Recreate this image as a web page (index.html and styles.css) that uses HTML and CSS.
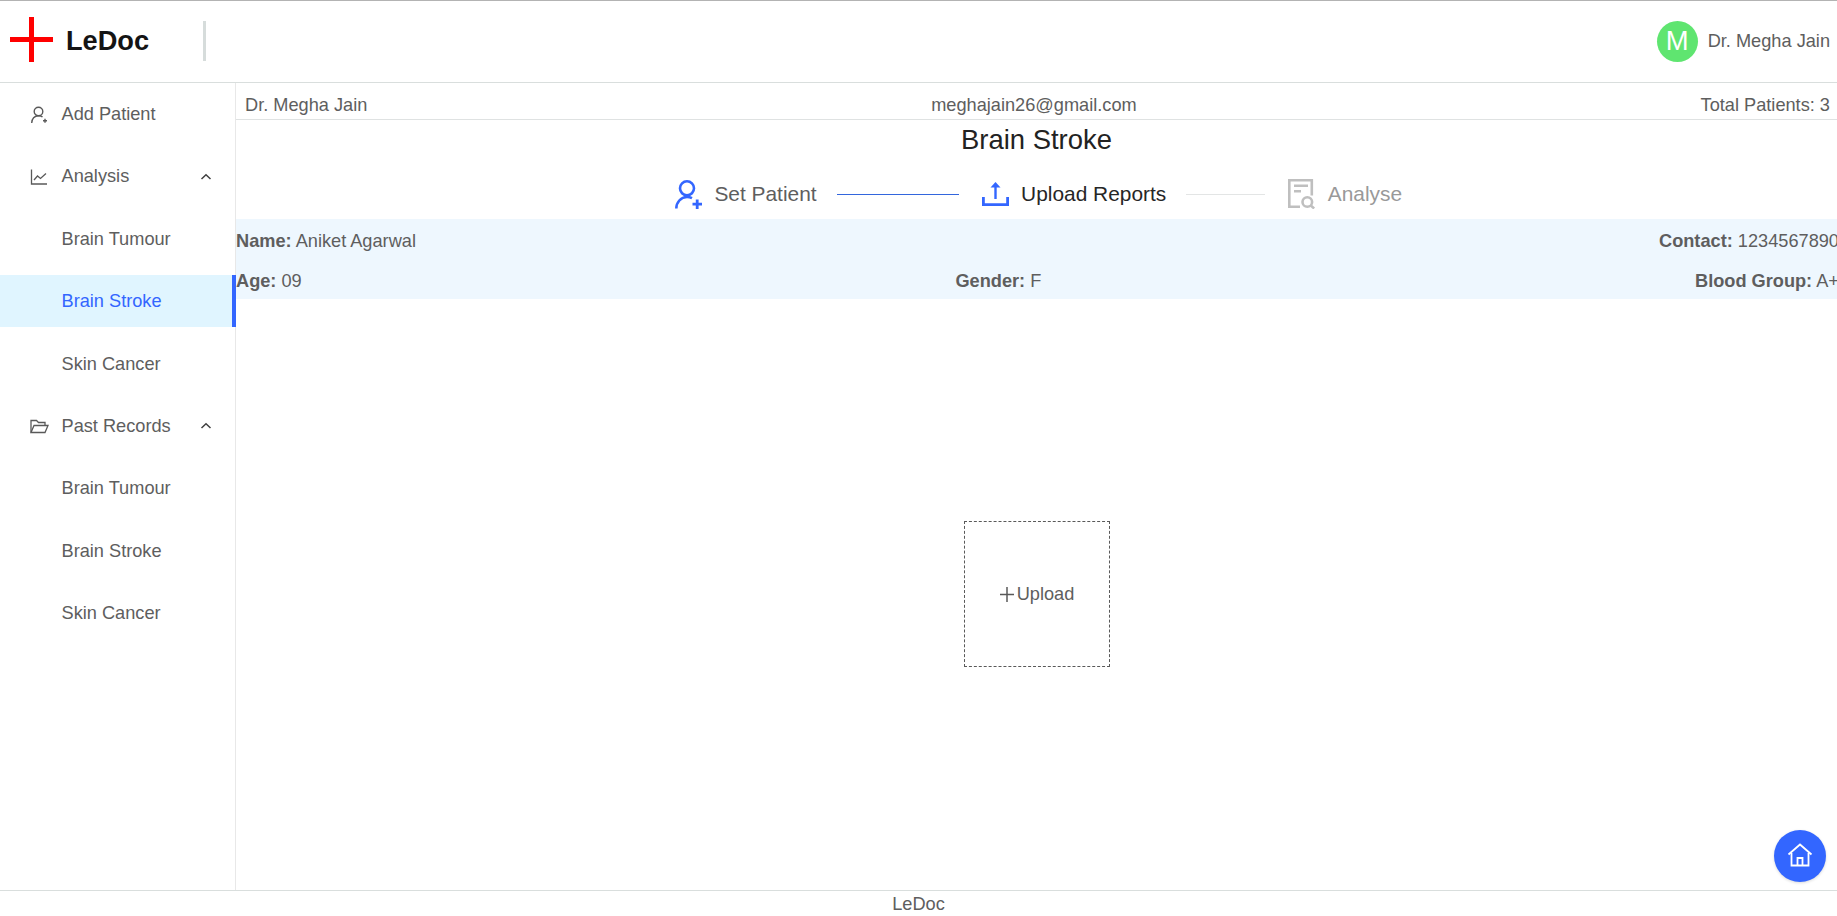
FILE: index.html
```html
<!DOCTYPE html>
<html lang="en">
<head>
<meta charset="utf-8">
<title>LeDoc</title>
<link rel="stylesheet" href="styles.css">
</head>
<body>
<div class="app">
  <header class="topbar">
    <div class="brand">
      <svg class="brand-cross" width="43" height="45" viewBox="0 0 43 45"><path d="M0 22.500H43M21.500 0V45" stroke="#ff0000" stroke-width="5" fill="none"/></svg>
      <span class="brand-name">LeDoc</span>
    </div>
    <div class="brand-sep"></div>
    <div class="user">
      <span class="avatar">M</span>
      <span class="user-name">Dr. Megha Jain</span>
    </div>
  </header>
  <div class="body">
    <nav class="sidebar">
      <div class="item">
        <svg class="item-icon" width="18" height="18" viewBox="0 0 18 18" fill="none" stroke="#595959" stroke-width="1.400"><circle cx="8.500" cy="5.500" r="4.300"/><path d="M1.700 17c0-4.200 2.800-7.300 6.800-7.300 1.600 0 3 .4 4 1.300"/><path d="M13 14.800h4M15 12.800v4"/></svg>
        <span>Add Patient</span>
      </div>
      <div class="item">
        <svg class="item-icon" width="18" height="18" viewBox="0 0 18 18" fill="none" stroke="#595959" stroke-width="1.300"><path d="M1.500 1.500V16h15.500"/><path d="M4 12l3.500-4 3 2.500L16 5.500"/></svg>
        <span class="item-label">Analysis</span>
        <svg class="caret" width="12" height="8" viewBox="0 0 12 8" fill="none" stroke="#404040" stroke-width="1.500"><path d="M1.500 6L6 1.800 10.500 6"/></svg>
      </div>
      <div class="item sub">Brain Tumour</div>
      <div class="item sub active">Brain Stroke</div>
      <div class="item sub">Skin Cancer</div>
      <div class="item">
        <svg class="item-icon folder" width="19" height="15" viewBox="0 0 19 15" fill="none" stroke="#595959" stroke-width="1.300"><path d="M1 13.500V1.500h5.500l2 2H15v3"/><path d="M1 13.500l3-7h14l-3 7z"/></svg>
        <span class="item-label">Past Records</span>
        <svg class="caret" width="12" height="8" viewBox="0 0 12 8" fill="none" stroke="#404040" stroke-width="1.500"><path d="M1.500 6L6 1.800 10.500 6"/></svg>
      </div>
      <div class="item sub">Brain Tumour</div>
      <div class="item sub">Brain Stroke</div>
      <div class="item sub">Skin Cancer</div>
    </nav>
    <main class="content">
      <div class="doctor-row">
        <span>Dr. Megha Jain</span>
        <span>meghajain26@gmail.com</span>
        <span>Total Patients: 3</span>
      </div>
      <h1 class="title">Brain Stroke</h1>
      <div class="steps">
        <div class="step">
          <svg width="27" height="29" viewBox="0 0 27 29" fill="none" stroke="#3366ff" stroke-width="2.600"><circle cx="12" cy="8.300" r="7"/><path d="M1.300 28.500c0-6 4.500-11.500 10.700-11.500 2 0 3.500.4 5 1.200"/><path d="M17.500 24.200h9.500M22.200 19.500v9.500" stroke-width="2.800"/></svg>
          <span class="step-label">Set Patient</span>
        </div>
        <div class="connector done"></div>
        <div class="step">
          <svg width="27" height="24" viewBox="0 0 27 24" fill="none" stroke="#3366ff" stroke-width="2.400"><path d="M13.500 17V3"/><path d="M13.500 0l5 5.500h-10z" fill="#3366ff" stroke="none"/><path d="M1.400 15v7.600h24.200V15" stroke-width="2.800"/></svg>
          <span class="step-label current">Upload Reports</span>
        </div>
        <div class="connector"></div>
        <div class="step">
          <svg width="27" height="30" viewBox="0 0 27 30" fill="none" stroke="#bfbfbf" stroke-width="2.600"><path d="M12 27.700H1.300V1.300h22.500V16.500"/><path d="M6 6.700h14M6 12.300h7"/><circle cx="19.300" cy="23" r="4.800"/><path d="M22.800 26.500l3.400 3"/></svg>
          <span class="step-label pending">Analyse</span>
        </div>
      </div>
      <section class="info">
        <div class="info-row">
          <span><b>Name:</b> Aniket Agarwal</span>
          <span class="contact"><b>Contact:</b> 1234567890</span>
        </div>
        <div class="info-row">
          <span><b>Age:</b> 09</span>
          <span><b>Gender:</b> F</span>
          <span><b>Blood Group:</b> A+</span>
        </div>
      </section>
      <div class="upload-area">
        <div class="upload-box">
          <svg width="14" height="15" viewBox="0 0 14 15" fill="none" stroke="#595959" stroke-width="1.500"><path d="M0 7.500h14M7 0v15"/></svg>
          <span>Upload</span>
        </div>
      </div>
    </main>
  </div>
  <footer class="footer">LeDoc</footer>
  <button class="home" type="button" aria-label="Home">
    <svg class="home-icon" width="26" height="24" viewBox="0 0 26 24" fill="none" stroke="#ffffff" stroke-width="1.800"><path d="M1.500 11.500L13 1.500l11.500 10"/><path d="M4.500 10v12.500h17V10"/><path d="M10.500 22.500V15h5v7.500"/></svg>
  </button>
</div>
</body>
</html>
```
FILE: styles.css
```css
* { box-sizing: border-box; }
html, body { margin: 0; height: 100%; }
body {
  font-family: "Liberation Sans", Arial, sans-serif;
  font-size: 18.2px;
  color: #5e5e5e;
  background: #fff;
}
.app {
  position: relative;
  height: 916px;
  display: flex;
  flex-direction: column;
  overflow: hidden;
  border-top: 1px solid #b3b3b3;
}
.topbar {
  height: 82px;
  flex: none;
  display: flex;
  align-items: center;
  border-bottom: 1px solid #d9dedd;
  padding: 0 7px 1px 10px;
}
.brand { display: flex; align-items: center; width: 193px; }
.brand-cross { flex: none; margin-bottom: 3px; }
.brand-name {
  margin-left: 13px;
  font-size: 27.2px;
  font-weight: 700;
  color: #141414;
}
.brand-sep { width: 3px; height: 40px; background: #d6dcdb; }
.user { margin-left: auto; display: flex; align-items: center; gap: 10px; }
.avatar {
  width: 41px;
  height: 41px;
  border-radius: 50%;
  background: #5fe570;
  color: #fff;
  font-size: 27.43px;
  display: flex;
  align-items: center;
  justify-content: center;
}
.body { flex: 1; display: flex; min-height: 0; }
.sidebar {
  width: 236px;
  flex: none;
  border-right: 1px solid #e8e8e8;
  padding-top: 5px;
  display: flex;
  flex-direction: column;
  gap: 10.4px;
}
.item {
  position: relative;
  height: 52px;
  flex: none;
  display: flex;
  align-items: center;
  padding-left: 30px;
  padding-top: 1px;
  margin-right: -1px;
}
.item-icon { flex: none; margin-right: 13.5px; }
.item-icon.folder { margin-right: 12.5px; }
.item-label { flex: 1; }
.caret { margin-right: 24px; }
.sub { padding-left: 61.5px; }
.active {
  background: #e0f5ff;
  color: #3366ff;
  border-right: 4px solid #3366ff;
}
.content { flex: 1; min-width: 0; display: flex; flex-direction: column; }
.doctor-row {
  height: 37px;
  flex: none;
  display: flex;
  justify-content: space-between;
  align-items: center;
  padding: 8px 7px 0 9px;
  border-bottom: 1px solid #dfe2e2;
}
.title {
  margin: 0;
  font-size: 27.43px;
  line-height: 40px;
  font-weight: 400;
  color: #222;
  text-align: center;
  flex: none;
}
.steps {
  height: 59px;
  flex: none;
  display: flex;
  align-items: center;
  justify-content: center;
  gap: 21.5px;
  padding: 9px 0 0 4px;
}
.step { display: flex; align-items: center; gap: 12.5px; }
.step-label { font-size: 20.9px; }
.step-label.current { color: #262626; }
.step-label.pending { color: #999; }
.connector { width: 79px; height: 1px; background: #e3e5e5; margin: 1px 2px 0 -2px; }
.connector.done { width: 122px; background: #3366dd; margin: 1px 1px 0 -1px; }
.info {
  height: 80px;
  flex: none;
  background: #eef7fe;
  display: flex;
  flex-direction: column;
  justify-content: space-between;
}
.info-row {
  height: 40px;
  display: flex;
  justify-content: space-between;
  align-items: center;
  padding-top: 5px;
  margin-right: -2px;
}
.upload-area {
  flex: 1;
  display: flex;
  align-items: center;
  justify-content: center;
  padding-bottom: 1px;
}
.upload-box {
  width: 146px;
  height: 146px;
  border: 1px dashed #595959;
  display: flex;
  align-items: center;
  justify-content: center;
  gap: 2.5px;
  padding-left: 1.5px;
}
.footer {
  height: 26px;
  flex: none;
  border-top: 1px solid #d9dedd;
  text-align: center;
  line-height: 26px;
}
.home {
  position: absolute;
  right: 11px;
  bottom: 34px;
  width: 52px;
  height: 52px;
  padding: 0;
  border: 0;
  border-radius: 50%;
  background: #3366ff;
  display: flex;
  align-items: center;
  justify-content: center;
  box-shadow: 0 1px 3px rgba(0,0,0,.15);
}
.home-icon { margin-bottom: 2px; }
```
